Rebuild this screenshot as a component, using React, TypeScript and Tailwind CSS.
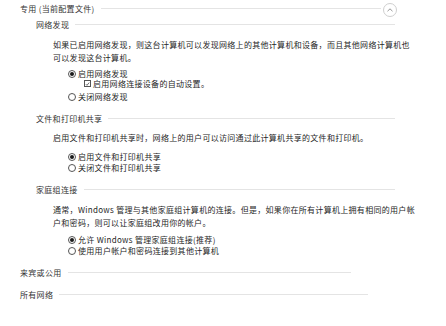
import React from "react";

const font = { fontFamily: '"Noto Sans CJK SC", "Noto Sans", sans-serif' };

function Radio({ checked }: { checked?: boolean }) {
  return (
    <span className="w-[8px] h-[8px] rounded-full border border-[#555] flex items-center justify-center mr-[2px] shrink-0">
      {checked && <span className="w-[4px] h-[4px] rounded-full bg-[#1a1a1a]" />}
    </span>
  );
}

function Check() {
  return (
    <span className="w-[7px] h-[7px] border border-[#555] flex items-center justify-center mr-[2px] shrink-0">
      <svg width="6" height="6" viewBox="0 0 6 6">
        <path d="M1 3.2 L2.4 4.6 L5 1.3" fill="none" stroke="#222" strokeWidth="0.8" />
      </svg>
    </span>
  );
}

function Heading({ text, width, className = "" }: { text: string; width: string; className?: string }) {
  return (
    <div className={`flex items-center h-[13px] leading-[13px] ${width} ${className}`}>
      <span className="whitespace-nowrap text-[#333]">{text}</span>
      <span className="flex-1 h-px bg-[#e4e4e4] ml-[6px]" />
    </div>
  );
}

function Opt({ children, className = "" }: { children: React.ReactNode; className?: string }) {
  return <div className={`flex items-center h-[11px] leading-[11px] whitespace-nowrap ${className}`}>{children}</div>;
}

export default function App() {
  return (
    <div className="w-[446px] h-[326px] bg-white text-[8px] tracking-[0.3px] text-[#262626] overflow-hidden" style={font}>
      <div className="pl-[20px] pt-[2px]">
        <div className="flex items-center w-[377px] h-[13px] leading-[13px]">
          <span className="whitespace-nowrap text-[#333]">专用 (当前配置文件)</span>
          <span className="flex-1 h-px bg-[#e4e4e4] ml-[6px]" />
          <span className="w-[14px] h-[14px] rounded-full border border-[#cfcfcf] flex items-center justify-center ml-[2px] mt-[2px]">
            <svg width="8" height="6" viewBox="0 0 8 6">
              <path d="M1.5 4.2 L4 1.8 L6.5 4.2" fill="none" stroke="#888" strokeWidth="0.9" />
            </svg>
          </span>
        </div>

        <div className="pl-[16px]">
          <Heading text="网络发现" width="w-[359px]" className="mt-[3px]" />
          <div className="pl-[17px] mt-[7px] leading-[13px] whitespace-nowrap">
            <div>如果已启用网络发现，则这台计算机可以发现网络上的其他计算机和设备，而且其他网络计算机也</div>
            <div>可以发现这台计算机。</div>
          </div>
          <div className="pl-[32px] mt-[4px]">
            <Opt><Radio checked />启用网络发现</Opt>
            <Opt className="pl-[16px] -mt-[1px]"><Check />启用网络连接设备的自动设置。</Opt>
            <Opt className="mt-[2px]"><Radio />关闭网络发现</Opt>
          </div>

          <Heading text="文件和打印机共享" width="w-[359px]" className="mt-[10px]" />
          <div className="pl-[17px] mt-[6px] leading-[13px] whitespace-nowrap">
            <div>启用文件和打印机共享时，网络上的用户可以访问通过此计算机共享的文件和打印机。</div>
          </div>
          <div className="pl-[32px] mt-[7px]">
            <Opt><Radio checked />启用文件和打印机共享</Opt>
            <Opt><Radio />关闭文件和打印机共享</Opt>
          </div>

          <Heading text="家庭组连接" width="w-[359px]" className="mt-[10px]" />
          <div className="pl-[17px] mt-[7px] leading-[13px] whitespace-nowrap">
            <div>通常，Windows 管理与其他家庭组计算机的连接。但是，如果你在所有计算机上拥有相同的用户帐</div>
            <div>户和密码，则可以让家庭组改用你的帐户。</div>
          </div>
          <div className="pl-[32px] mt-[5px]">
            <Opt><Radio checked />允许 Windows 管理家庭组连接(推荐)</Opt>
            <Opt><Radio />使用用户帐户和密码连接到其他计算机</Opt>
          </div>
        </div>

        <Heading text="来宾或公用" width="w-[331px]" className="mt-[10px]" />
        <Heading text="所有网络" width="w-[348px]" className="mt-[9px]" />
      </div>
    </div>
  );
}
